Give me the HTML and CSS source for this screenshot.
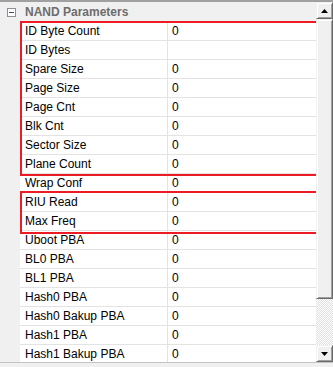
FILE: index.html
```html
<!DOCTYPE html>
<html>
<head>
<meta charset="utf-8">
<link rel="stylesheet" href="styles.css">
</head>
<body>
<div class="window">
  <div class="grid">
    <div class="header">
      <span class="toggle"><svg width="9" height="9" viewBox="0 0 9 9"><rect x="0.5" y="0.5" width="8" height="8" fill="#fff" stroke="#8e8f8f"/><rect x="2" y="4" width="5" height="1" fill="#3b4d6b"/></svg></span>
      <span class="cat">NAND Parameters</span>
    </div>
    <div class="row"><div class="gutter"></div><div class="name">ID Byte Count</div><div class="val">0</div></div>
    <div class="row"><div class="gutter"></div><div class="name">ID Bytes</div><div class="val"></div></div>
    <div class="row"><div class="gutter"></div><div class="name">Spare Size</div><div class="val">0</div></div>
    <div class="row"><div class="gutter"></div><div class="name">Page Size</div><div class="val">0</div></div>
    <div class="row"><div class="gutter"></div><div class="name">Page Cnt</div><div class="val">0</div></div>
    <div class="row"><div class="gutter"></div><div class="name">Blk Cnt</div><div class="val">0</div></div>
    <div class="row"><div class="gutter"></div><div class="name">Sector Size</div><div class="val">0</div></div>
    <div class="row"><div class="gutter"></div><div class="name">Plane Count</div><div class="val">0</div></div>
    <div class="row"><div class="gutter"></div><div class="name">Wrap Conf</div><div class="val">0</div></div>
    <div class="row"><div class="gutter"></div><div class="name">RIU Read</div><div class="val">0</div></div>
    <div class="row"><div class="gutter"></div><div class="name">Max Freq</div><div class="val">0</div></div>
    <div class="row"><div class="gutter"></div><div class="name">Uboot PBA</div><div class="val">0</div></div>
    <div class="row"><div class="gutter"></div><div class="name">BL0 PBA</div><div class="val">0</div></div>
    <div class="row"><div class="gutter"></div><div class="name">BL1 PBA</div><div class="val">0</div></div>
    <div class="row"><div class="gutter"></div><div class="name">Hash0 PBA</div><div class="val">0</div></div>
    <div class="row"><div class="gutter"></div><div class="name">Hash0 Bakup PBA</div><div class="val">0</div></div>
    <div class="row"><div class="gutter"></div><div class="name">Hash1 PBA</div><div class="val">0</div></div>
    <div class="row"><div class="gutter"></div><div class="name">Hash1 Bakup PBA</div><div class="val">0</div></div>
    <div class="mark mark1"></div>
    <div class="mark mark2"></div>
  </div>
  <div class="scrollbar">
    <div class="btn"><svg width="7" height="4" viewBox="0 0 7 4"><path d="M3.5 0 L7 4 L0 4 Z" fill="#000"/></svg></div>
    <div class="thumb"></div>
    <div class="track"></div>
    <div class="btn"><svg width="7" height="4" viewBox="0 0 7 4"><path d="M0 0 L7 0 L3.5 4 Z" fill="#000"/></svg></div>
  </div>
</div>
</body>
</html>
```
FILE: styles.css
```css
html, body {
  margin: 0;
  padding: 0;
}
body {
  width: 333px;
  height: 367px;
  overflow: hidden;
  background: #f0f0f0;
  font-family: "Liberation Sans", Arial, sans-serif;
  font-size: 12px;
  color: #000;
}
.window {
  display: flex;
  height: 360px;
  border-top: 2px solid #a0a0a0;
  border-bottom: 1px solid #c4c4c4;
  overflow: hidden;
}
.grid {
  position: relative;
  width: 316px;
  display: flex;
  flex-direction: column;
  background: #fff;
  overflow: hidden;
}
.header {
  height: 20px;
  flex: none;
  background: #f0f0f0;
  display: flex;
  align-items: center;
}
.toggle {
  width: 20px;
  padding-left: 7px;
  box-sizing: border-box;
  height: 9px;
  display: flex;
  margin-top: 1px;
}
.cat {
  font-weight: bold;
  color: #6d6d6d;
  padding-left: 5px;
  line-height: 20px;
}
.row {
  display: flex;
  height: 19px;
  flex: none;
}
.gutter {
  width: 20px;
  background: #f0f0f0;
  flex: none;
}
.name {
  width: 147px;
  flex: none;
  border-right: 1px solid #e3e3e3;
  border-bottom: 1px solid #e3e3e3;
  padding-left: 5px;
  box-sizing: border-box;
  line-height: 18px;
  width: 148px;
  white-space: nowrap;
}
.val {
  flex: 1;
  border-bottom: 1px solid #e3e3e3;
  padding-left: 4px;
  line-height: 18px;
}
.mark {
  position: absolute;
  left: 20px;
  width: 298px;
  border: 2px solid #ed1c24;
  box-sizing: border-box;
  z-index: 2;
}
.mark1 {
  top: 19px;
  height: 155px;
}
.mark2 {
  top: 189px;
  height: 43px;
}
.scrollbar {
  width: 17px;
  flex: none;
  display: flex;
  flex-direction: column;
  background: #f0f0f0;
}
.btn {
  height: 17px;
  flex: none;
  box-sizing: border-box;
  background: #f0f0f0;
  border-top: 1px solid #f0f0f0;
  border-left: 1px solid #f0f0f0;
  border-right: 1px solid #696969;
  border-bottom: 1px solid #696969;
  box-shadow: inset 1px 1px 0 #fff, inset -1px -1px 0 #a0a0a0;
  display: flex;
  align-items: center;
  justify-content: center;
}
.thumb {
  height: 280px;
  flex: none;
  box-sizing: border-box;
  background: #f0f0f0;
  border-top: 1px solid #f0f0f0;
  border-left: 1px solid #f0f0f0;
  border-right: 1px solid #696969;
  border-bottom: 1px solid #696969;
  box-shadow: inset 1px 1px 0 #fff, inset -1px -1px 0 #a0a0a0;
}
.track {
  flex: 1;
  background: repeating-conic-gradient(#fff 0 25%, #e0e0e0 0 50%) 0 0 / 2px 2px;
}
```
